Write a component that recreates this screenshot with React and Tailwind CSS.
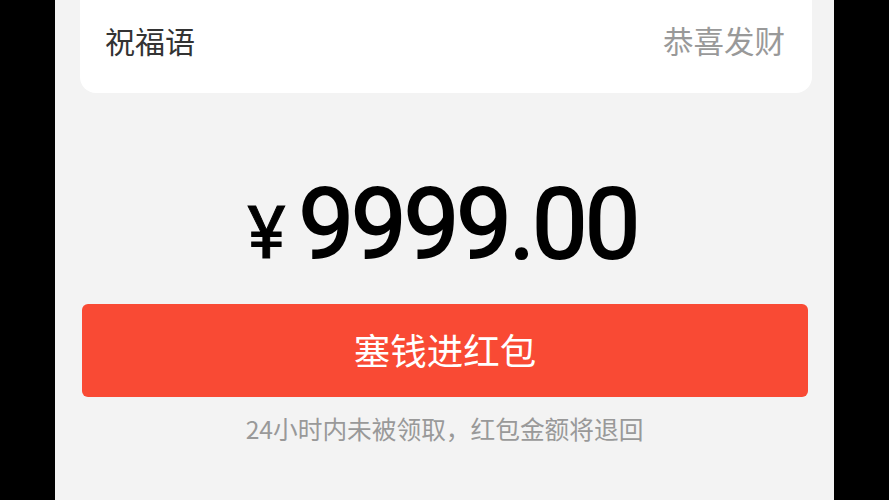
export default function App() {
  return (
    <div className="w-[889px] h-[500px] bg-black overflow-hidden" style={{ fontFamily: '"Noto Sans CJK SC", "Noto Sans", sans-serif' }}>
      <div className="w-[779px] h-full mx-auto bg-[#f3f3f3] flex flex-col">
        <div className="pl-[25px] pr-[22px]">
          <div className="h-[93px] bg-white rounded-b-[16px] flex items-center justify-between pl-[25px] pr-[27px] pb-[13px]">
            <span className="text-[30px] leading-none text-[#333333]">祝福语</span>
            <span className="text-[30.5px] leading-none text-[#999999]">恭喜发财</span>
          </div>
        </div>

        <div className="mt-[82px] flex items-baseline justify-center pr-[4px]" style={{ fontFamily: 'Roboto, "Liberation Sans", sans-serif' }}>
          <span className="text-[72px] leading-none text-black mr-[13px] [-webkit-text-stroke:1px_black]">¥</span>
          <span className="text-[99px] leading-none text-black tracking-[-3px] [-webkit-text-stroke:2px_black]">9999.00</span>
        </div>

        <div className="pl-[27px] pr-[26px] mt-[30px]">
          <button className="w-full h-[93px] rounded-[6px] bg-[#f94a34] text-white text-[36.5px] leading-none flex items-center justify-center">
            塞钱进红包
          </button>
        </div>

        <p className="mt-[19px] text-center text-[24.7px] leading-none text-[#999999]">
          24小时内未被领取，红包金额将退回
        </p>
      </div>
    </div>
  );
}
